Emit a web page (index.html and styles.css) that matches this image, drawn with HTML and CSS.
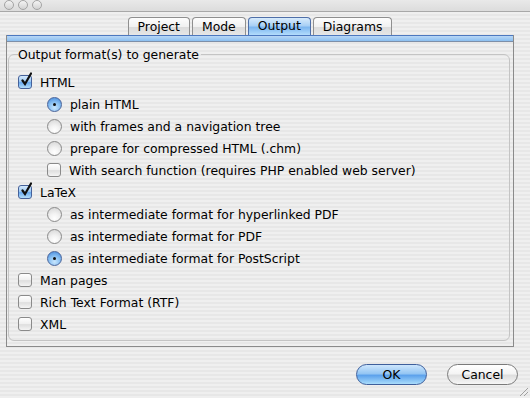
FILE: index.html
```html
<!DOCTYPE html>
<html>
<head>
    <meta name="viewport" content="width=device-width, initial-scale=1.0">
    <title>Doxygen Wizard - Output</title>
    <link rel="stylesheet" href="styles.css">
</head>
<body>
    <div class="titlebar">
        <span class="light"></span><span class="light"></span><span class="light"></span>
    </div>
    <div class="tabs">
        <div class="tab">Project</div>
        <div class="tab">Mode</div>
        <div class="tab active">Output</div>
        <div class="tab">Diagrams</div>
    </div>
    <div class="panel">
        <div class="panel-strip"></div>
        <fieldset class="group">
            <legend>Output format(s) to generate</legend>
            <div class="row"><span class="cb on"></span>HTML</div>
            <div class="row sub"><span class="rb on"></span>plain HTML</div>
            <div class="row sub"><span class="rb"></span>with frames and a navigation tree</div>
            <div class="row sub"><span class="rb"></span>prepare for compressed HTML (.chm)</div>
            <div class="row sub"><span class="cb"></span>With search function (requires PHP enabled web server)</div>
            <div class="row"><span class="cb on"></span>LaTeX</div>
            <div class="row sub"><span class="rb"></span>as intermediate format for hyperlinked PDF</div>
            <div class="row sub"><span class="rb"></span>as intermediate format for PDF</div>
            <div class="row sub"><span class="rb on"></span>as intermediate format for PostScript</div>
            <div class="row"><span class="cb"></span>Man pages</div>
            <div class="row"><span class="cb"></span>Rich Text Format (RTF)</div>
            <div class="row"><span class="cb"></span>XML</div>
        </fieldset>
    </div>
    <div class="buttons">
        <button class="btn default">OK</button>
        <button class="btn">Cancel</button>
    </div>
    <div class="grip"></div>
</body>
</html>
```

FILE: styles.css
```css
body {
    margin: 0;
    width: 530px;
    height: 398px;
    overflow: hidden;
    position: relative;
    font-family: 'DejaVu Sans', sans-serif;
    font-size: 12.4px;
    color: #000;
    background: repeating-linear-gradient(#efefef 0, #efefef 2px, #e7e7e7 2px, #e7e7e7 4px);
}
.titlebar {
    height: 11px;
    padding-left: 4px;
    display: flex;
    align-items: flex-start;
    gap: 4px;
    border-bottom: 1px solid #a8a8a8;
    background: linear-gradient(#e9e9e9, #dcdcdc);
}
.light {
    width: 8px;
    height: 8px;
    margin-top: 0;
    border-radius: 50%;
    border: 1px solid #a4a4a4;
    background: linear-gradient(#f4f4f4, #d2d2d2);
}
.tabs {
    display: flex;
    justify-content: center;
    gap: 2px;
    margin-top: 5px;
    padding-right: 10px;
    height: 18px;
}
.tab {
    height: 17px;
    line-height: 17px;
    padding: 0 9px;
    border: 1px solid #8f8f8f;
    border-bottom: none;
    border-radius: 4px 4px 0 0;
    background: linear-gradient(#fdfdfd, #f1f1f1 50%, #dcdcdc 55%, #e6e6e6);
}
.tab.active {
    border-color: #4f6fa8;
    line-height: 15px;
    background: linear-gradient(#d8ebfc, #a9d0f5 45%, #7db6ef 55%, #b3dcfc);
}
.panel {
    margin: 0 16px 0 6px;
    border: 1px solid #8a8a8a;
    border-top: none;
    padding: 0 3px 5px 1px;
}
.panel-strip {
    height: 5px;
    margin: 0 -3px 0 -1px;
    border-top: 1px solid #4d78bf;
    border-bottom: 1px solid #7e8fa8;
    background: linear-gradient(#b9d7f6, #8bbff0);
}
.group {
    margin: 5px 0 0 0;
    padding: 9px 0 5px 9px;
    border: 1px solid #c4c4c4;
    border-radius: 6px;
}
.group legend {
    padding: 0 2px 0 0;
    margin-left: 0;
}
.row {
    height: 22px;
    display: flex;
    align-items: center;
}
.row.sub {
    padding-left: 29px;
}
.cb {
    width: 12px;
    height: 12px;
    margin-right: 8px;
    border: 1px solid #8a8a8a;
    border-radius: 3px;
    background: linear-gradient(#ffffff, #f0f0f0 50%, #dedede 55%, #f4f4f4);
    position: relative;
}
.cb.on {
    border-color: #45619a;
    background: linear-gradient(#d4e9fd, #9fcaf3 45%, #6aaaf0 55%, #b5def9);
}
.cb.on::after {
    content: '';
    position: absolute;
    left: 2px;
    top: -4px;
    width: 11px;
    height: 14px;
    background: url("data:image/svg+xml;utf8,<svg xmlns='http://www.w3.org/2000/svg' width='11' height='14'><path d='M1.5 8.5 L4 12 L10 1.5' fill='none' stroke='%23111' stroke-width='2.2' stroke-linecap='round'/></svg>");
}
.rb {
    width: 13px;
    height: 13px;
    margin-right: 8px;
    border: 1px solid #8a8a8a;
    border-radius: 50%;
    background: radial-gradient(circle at 50% 80%, #ffffff, #f2f2f2 40%, #d8d8d8 90%);
    position: relative;
}
.rb.on {
    border-color: #4a649a;
    background: radial-gradient(circle at 50% 75%, #c9e6fd, #8cc2f3 45%, #4c90df 90%);
}
.rb.on::after {
    content: '';
    position: absolute;
    left: 5px;
    top: 5px;
    width: 3px;
    height: 3px;
    border-radius: 50%;
    background: #111;
}
.buttons {
    display: flex;
    justify-content: flex-end;
    gap: 20px;
    margin-top: 17px;
    padding-right: 12px;
}
.btn {
    height: 21px;
    padding: 0;
    border: 1px solid #7a7a7a;
    border-radius: 11px;
    font-family: 'DejaVu Sans', sans-serif;
    font-size: 12.4px;
    color: #000;
    background: linear-gradient(#ffffff, #f4f4f4 45%, #dedede 55%, #f6f6f6);
    width: 71px;
}
.btn.default {
    border-color: #3e5f9c;
    background: linear-gradient(#cde6fd, #95c6f3 45%, #5da2ec 55%, #a9dcfb);
}
.grip {
    position: absolute;
    right: 2px;
    bottom: 2px;
    width: 10px;
    height: 10px;
    background: repeating-linear-gradient(135deg, transparent 0, transparent 2px, #a0a0a0 2px, #a0a0a0 3px);
    clip-path: polygon(100% 0, 100% 100%, 0 100%);
}
```
